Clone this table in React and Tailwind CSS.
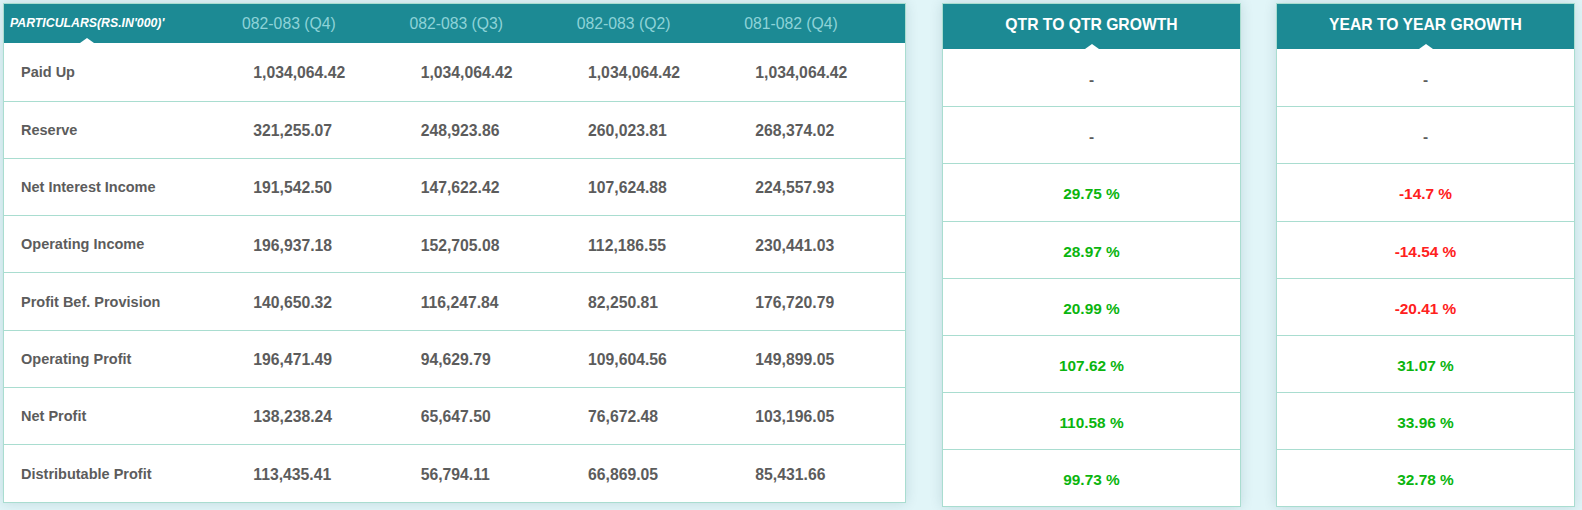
import React from "react";

const rows = [
  ["Paid Up", "1,034,064.42", "1,034,064.42", "1,034,064.42", "1,034,064.42"],
  ["Reserve", "321,255.07", "248,923.86", "260,023.81", "268,374.02"],
  ["Net Interest Income", "191,542.50", "147,622.42", "107,624.88", "224,557.93"],
  ["Operating Income", "196,937.18", "152,705.08", "112,186.55", "230,441.03"],
  ["Profit Bef. Provision", "140,650.32", "116,247.84", "82,250.81", "176,720.79"],
  ["Operating Profit", "196,471.49", "94,629.79", "109,604.56", "149,899.05"],
  ["Net Profit", "138,238.24", "65,647.50", "76,672.48", "103,196.05"],
  ["Distributable Profit", "113,435.41", "56,794.11", "66,869.05", "85,431.66"],
];

const qtr = ["-", "-", "29.75 %", "28.97 %", "20.99 %", "107.62 %", "110.58 %", "99.73 %"];
const yoy = ["-", "-", "-14.7 %", "-14.54 %", "-20.41 %", "31.07 %", "33.96 %", "32.78 %"];

const heads = ["082-083 (Q4)", "082-083 (Q3)", "082-083 (Q2)", "081-082 (Q4)"];

function colorFor(v) {
  if (v === "-") return "text-[#5c5c5c]";
  if (v.startsWith("-")) return "text-[#ff2020]";
  return "text-[#0bb50f]";
}

function GrowthPanel({ title, values }) {
  return (
    <div className="w-[299px] shrink-0 border border-[#a9ddd0] bg-white shadow-[0_0_12px_rgba(0,60,70,0.14)]">
      <div className="relative flex h-[45.3px] items-center justify-center bg-[#1c8a94] pb-[3px] text-[15.7px] font-bold text-white">
        {title}
        <div className="absolute bottom-0 left-1/2 h-0 w-0 -translate-x-1/2 border-l-[7px] border-r-[7px] border-b-[5px] border-l-transparent border-r-transparent border-b-white" />
      </div>
      {values.map((v, i) => (
        <div
          key={i}
          className={`flex h-[57.1px] items-center justify-center pt-[3px] text-[15.4px] font-bold ${colorFor(v)} ${
            i > 0 ? "border-t border-[#a9ddd0]" : ""
          }`}
        >
          {v}
        </div>
      ))}
    </div>
  );
}

export default function App() {
  return (
    <div
      className="flex h-[510px] w-[1582px] items-start gap-[36px] bg-[#e1f5f8] pl-[3px] pt-[3px]"
      style={{ fontFamily: '"Liberation Sans", Arial, sans-serif' }}
    >
      <div className="w-[903px] shrink-0 border border-[#a9ddd0] bg-white shadow-[0_0_12px_rgba(0,60,70,0.14)]">
        <div className="grid h-[39.3px] grid-cols-[231.6px_repeat(4,1fr)] items-center bg-[#1c8a94]">
          <div className="relative flex h-full items-center pl-[6px] text-[12.3px] font-bold italic text-white">
            PARTICULARS(RS.IN'000)'
            <div className="absolute bottom-0 left-[76px] h-0 w-0 border-l-[7px] border-r-[7px] border-b-[5px] border-l-transparent border-r-transparent border-b-white" />
          </div>
          {heads.map((h) => (
            <div key={h} className="pl-[6.5px] text-[15.75px] text-[#8ed3d8]">
              {h}
            </div>
          ))}
        </div>
        {rows.map((r, i) => (
          <div
            key={r[0]}
            className={`grid h-[57.3px] grid-cols-[231.6px_repeat(4,1fr)] items-center pt-[2px] text-[#5c5c5c] ${
              i > 0 ? "border-t border-[#a9ddd0]" : ""
            }`}
          >
            <div className="pl-[17px] text-[14.5px] font-bold">{r[0]}</div>
            {r.slice(1).map((v, j) => (
              <div key={j} className="pl-[17.7px] text-[15.75px] font-bold">
                {v}
              </div>
            ))}
          </div>
        ))}
      </div>
      <GrowthPanel title="QTR TO QTR GROWTH" values={qtr} />
      <div className="-ml-[1px]">
        <GrowthPanel title="YEAR TO YEAR GROWTH" values={yoy} />
      </div>
    </div>
  );
}
